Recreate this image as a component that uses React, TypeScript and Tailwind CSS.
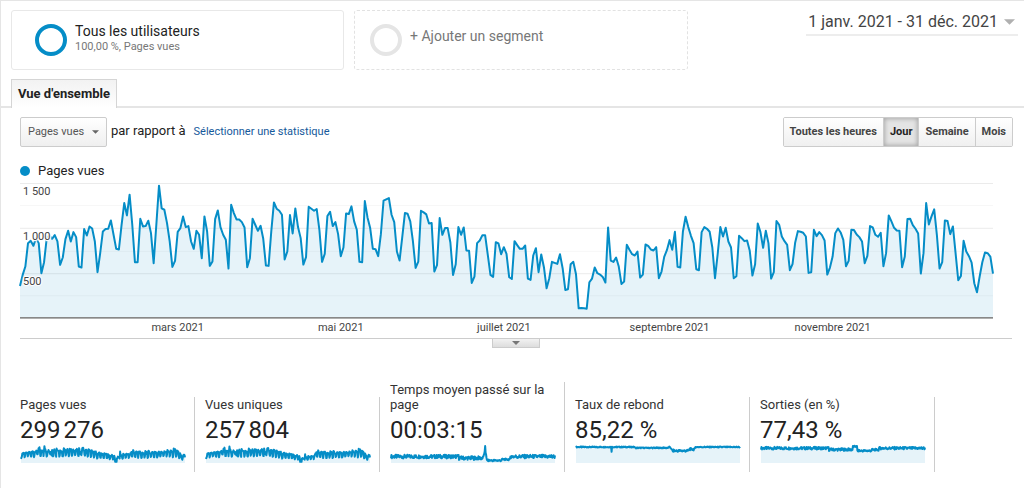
import { useState } from "react";

// One entry per day of the year, measured downwards: 25 is the 1 500 line, 429 the axis
const AXIS = 429;
const TOP = 25;
const dailyViews = [
    333, 300, 275, 205, 198, 213, 190, 205, 295, 262, 190, 182, 192, 181, 200, 270, 248, 193, 168, 200,
    172, 187, 275, 278, 163, 182, 155, 161, 200, 292, 235, 170, 163, 162, 137, 180, 222, 224, 150, 85,
    122, 60, 150, 262, 262, 132, 155, 154, 138, 175, 265, 150, 33, 101, 105, 145, 200, 276, 258, 171,
    160, 125, 157, 154, 200, 222, 168, 180, 250, 125, 170, 273, 260, 133, 107, 157, 180, 195, 281, 90,
    115, 134, 134, 142, 158, 277, 250, 132, 150, 168, 153, 192, 272, 273, 170, 83, 102, 108, 120, 254,
    230, 121, 176, 101, 157, 190, 269, 247, 96, 102, 108, 103, 165, 261, 237, 124, 111, 154, 142, 178,
    244, 218, 116, 118, 95, 140, 165, 261, 262, 79, 128, 160, 222, 223, 244, 178, 78, 74, 70, 120,
    142, 230, 257, 187, 115, 117, 140, 200, 279, 260, 108, 113, 119, 146, 145, 290, 271, 130, 180, 160,
    160, 203, 300, 268, 157, 180, 158, 227, 228, 324, 305, 205, 197, 181, 181, 240, 300, 306, 202, 206,
    238, 217, 237, 307, 312, 199, 211, 222, 222, 212, 311, 315, 242, 220, 292, 239, 277, 340, 310, 261,
    264, 267, 238, 280, 345, 343, 268, 261, 298, 400, 399, 400, 401, 322, 311, 278, 295, 299, 306, 323,
    158, 257, 261, 248, 275, 327, 320, 210, 225, 238, 242, 230, 308, 299, 209, 213, 224, 227, 217, 310,
    290, 246, 226, 196, 225, 171, 276, 278, 170, 126, 157, 183, 205, 283, 286, 172, 157, 162, 171, 218,
    310, 238, 157, 185, 159, 200, 218, 310, 304, 183, 190, 199, 197, 228, 302, 268, 146, 172, 219, 168,
    205, 311, 292, 139, 150, 185, 199, 210, 286, 268, 203, 169, 171, 174, 185, 294, 292, 165, 184, 172,
    181, 197, 299, 278, 245, 175, 161, 173, 195, 274, 258, 165, 166, 179, 187, 200, 265, 243, 154, 158,
    180, 186, 174, 274, 235, 122, 140, 159, 167, 168, 277, 245, 133, 132, 151, 162, 176, 296, 235, 85,
    149, 125, 104, 180, 281, 262, 137, 139, 178, 155, 235, 316, 303, 198, 230, 244, 263, 325, 352, 305,
    262, 233, 235, 245, 296,
];
const LAST_DAY = dailyViews.length - 1;

const months = [
    { label: "mars 2021", day: 59 },
    { label: "mai 2021", day: 120 },
    { label: "juillet 2021", day: 181 },
    { label: "septembre 2021", day: 243 },
    { label: "novembre 2021", day: 304 },
];

const periods = ["Toutes les heures", "Jour", "Semaine", "Mois"];

const noise = (i: number) => {
    const n = Math.sin(i * 12.9898) * 43758.5453;
    return (n - Math.floor(n)) * 2 - 1;
};

// Sparkline series, as a share of the sparkline's height
const views = dailyViews.map((y) => (AXIS - y) / 400);
const uniqueViews = views.map((v, i) => (i > 214 && i < 240 ? v * 0.75 : v * 0.98));
const timeOnPage = views.map((_, i) => {
    if (i >= 205 && i < 213) return [0.4, 0.48, 0.55, 0.7, 1, 0.6, 0.5, 0.3][i - 205];
    if (i >= 213 && i < 265) return 0.15 + noise(i) * 0.05 + (i > 245 ? 0.06 : 0);
    return (i > 150 && i < 205 ? 0.29 : 0.38) + noise(i) * 0.11;
});
const bounceRate = views.map((_, i) => {
    if (i === 79) return 0.66;
    if (i > 214 && i < 265) return 0.72 + noise(i) * 0.07 + (i > 250 ? 0.09 : 0);
    if (i > 206 && i <= 214) return 1 - (i - 206) * 0.03;
    return (i > 130 && i < 206 ? 0.89 : 0.94) + noise(i) * 0.03;
});
const exitRate = views.map((_, i) => {
    if (i >= 204 && i < 214) return 0.97 + noise(i) * 0.05;
    if (i >= 214 && i < 262) return 0.72 + noise(i) * 0.06 + (i > 245 ? 0.06 : 0);
    return (i > 150 && i < 204 ? 0.79 : 0.87) + noise(i) * 0.08;
});

const metrics = [
    { label: "Pages vues", value: "299\u202f276", series: views },
    { label: "Vues uniques", value: "257\u202f804", series: uniqueViews },
    { label: "Temps moyen passé sur la page", value: "00:03:15", series: timeOnPage },
    { label: "Taux de rebond", value: "85,22 %", series: bounceRate },
    { label: "Sorties (en %)", value: "77,43 %", series: exitRate },
];

const Caret = ({ className }: { className: string }) => (
    <svg viewBox="0 0 8 4" className={className} aria-hidden="true">
        <path d="M0 0h8L4 4z" fill="currentColor" />
    </svg>
);

const Segments = () => (
    <div className="flex items-start gap-[10px] pt-[9px] pr-[6px] pl-[10px]">
        <button className="flex h-[60px] w-[333px] items-start rounded-[3px] border border-[#e8e8e8] pt-[13px] pl-[23px] text-left">
            <span className="h-8 w-8 shrink-0 rounded-full border-4 border-[#058dc7]" />
            <span className="-mt-px ml-2 flex flex-col">
                <span className="text-[14px] leading-4 text-[#222]">Tous les utilisateurs</span>
                <span className="text-[11px] leading-4 text-[#777]">100,00 %, Pages vues</span>
            </span>
        </button>
        <button className="flex h-[60px] w-[334px] items-start rounded-[3px] border border-dashed border-[#e2e2e2] pt-[13px] pl-[15px] text-left">
            <span className="h-8 w-8 shrink-0 rounded-full border-4 border-[#e5e5e5]" />
            <span className="ml-2 pt-1 text-[14px] leading-4 text-[#777]">+ Ajouter un segment</span>
        </button>
        <button className="ml-auto flex h-[26px] items-center gap-[6px] border-b-2 border-[#ededed] pr-[3px] pl-[2px] text-[16px] leading-5 whitespace-nowrap text-[#444]">
            1 janv. 2021 - 31 déc. 2021
            <Caret className="h-[6px] w-[11px] text-[#b0b0b0]" />
        </button>
    </div>
);

const Toolbar = () => {
    const [period, setPeriod] = useState("Jour");

    return (
        <div className="flex items-center pt-[9px] pr-[11px] pl-[19px]">
            <div className="relative">
                <select
                    aria-label="Statistique"
                    className="block h-[30px] w-[87px] appearance-none rounded-[2px] border border-[#ccc] bg-linear-to-b from-white to-[#efefef] pl-[7px] text-[11px] text-[#555]"
                >
                    <option>Pages vues</option>
                </select>
                <Caret className="pointer-events-none absolute top-[13px] right-2 h-1 w-[7px] text-[#666]" />
            </div>
            <span className="ml-1 pb-[2px] text-[13px] leading-4 text-[#222]">par rapport à</span>
            <a href="#statistique" className="ml-2 text-[11px] leading-4 text-[#15599b]">
                Sélectionner une statistique
            </a>
            <div className="ml-auto flex h-[30px] divide-x divide-[#ccc] overflow-hidden rounded-[2px] border border-[#ccc]">
                {periods.map((name) => (
                    <button
                        key={name}
                        onClick={() => setPeriod(name)}
                        aria-pressed={name === period}
                        className={`px-[6px] text-[11px] font-bold ${
                            name === period
                                ? "bg-[#e4e4e4] text-[#222] shadow-[inset_0_0_4px_1px_#aaa]"
                                : "bg-linear-to-b from-white to-[#f0f0f0] text-[#444]"
                        }`}
                    >
                        {name}
                    </button>
                ))}
            </div>
        </div>
    );
};

const Chart = () => {
    const line = dailyViews.map((y, day) => `${day * 8},${y}`).join(" ");
    const halo = "[text-shadow:0_0_2px_#fff,0_0_2px_#fff,0_0_2px_#fff,0_0_3px_#fff,0_0_3px_#fff,1px_0_#fff,-1px_0_#fff,0_1px_#fff,0_-1px_#fff]";

    return (
        <div className="pt-4 pr-3 pl-[19px]">
            <div className="flex items-center gap-2 text-[13px] leading-4 text-[#222]">
                <span className="h-[10px] w-[10px] rounded-full bg-[#058dc7]" />
                Pages vues
            </div>
            <div className="relative mt-1 mr-[19px]">
                <svg
                    viewBox={`0 ${TOP} ${LAST_DAY * 8} ${AXIS - TOP}`}
                    preserveAspectRatio="none"
                    className="block h-[135px] w-full overflow-visible"
                    role="img"
                    aria-label="Pages vues par jour"
                >
                    {[25, 91, 159, 228, 295, 361].map((y, i) => (
                        <rect key={y} x="0" y={y} width={LAST_DAY * 8} height="3" fill={i % 2 ? "#f7f7f7" : "#ebebeb"} />
                    ))}
                    <polygon points={`0,${AXIS} ${line} ${LAST_DAY * 8},${AXIS}`} fill="#058dc7" fillOpacity="0.1" />
                    <polyline
                        points={line}
                        fill="none"
                        stroke="#058dc7"
                        strokeWidth="2"
                        strokeLinejoin="round"
                        vectorEffect="non-scaling-stroke"
                    />
                    <rect x="0" y="426" width={LAST_DAY * 8} height="5" fill="#888" />
                </svg>
                <div className={`absolute top-[1px] left-[3px] flex flex-col gap-[29px] text-[11px] leading-4 text-[#444] ${halo}`}>
                    <span>1 500</span>
                    <span>1 000</span>
                    <span>500</span>
                </div>
                <div className="relative h-5">
                    {months.map(({ label, day }) => (
                        <span
                            key={label}
                            className="absolute top-[2px] -translate-x-1/2 text-[11px] leading-4 whitespace-nowrap text-[#444]"
                            style={{ left: `${(day / LAST_DAY) * 100}%` }}
                        >
                            {label}
                        </span>
                    ))}
                </div>
            </div>
            <div className="flex h-[10px] justify-center border-t border-[#ccc]">
                <button
                    aria-label="Afficher les annotations"
                    className="flex h-[9px] w-12 items-center justify-center border border-t-0 border-[#ccc] bg-linear-to-b from-[#f2f2f2] to-[#ddd]"
                >
                    <Caret className="h-1 w-2 text-[#777]" />
                </button>
            </div>
        </div>
    );
};

const Sparkline = ({ series }: { series: number[] }) => {
    const line = series.map((v, i) => `${i},${100 - v * 100}`).join(" ");

    return (
        <svg viewBox={`0 0 ${LAST_DAY} 100`} preserveAspectRatio="none" className="ml-[1px] block h-[17px] w-[164px] overflow-visible">
            <polygon points={`0,100 ${line} ${LAST_DAY},100`} fill="#058dc7" fillOpacity="0.1" />
            <polyline
                points={line}
                fill="none"
                stroke="#058dc7"
                strokeWidth="2"
                strokeLinejoin="round"
                vectorEffect="non-scaling-stroke"
            />
        </svg>
    );
};

const Metrics = () => (
    <div className="flex items-end pt-[34px] pb-4 pl-[9px]">
        {metrics.map(({ label, value, series }) => (
            <div key={label} className="w-[185px] border-r border-[#ccc] pr-2 pb-[9px] pl-[10px]">
                <div className="text-[13px] leading-[15px] text-[#333]">{label}</div>
                <div className="mt-[6px] mb-1 text-[24px] leading-6 text-[#222]">{value}</div>
                <Sparkline series={series} />
            </div>
        ))}
    </div>
);

export default function App() {
    return (
        <main className="border-t border-l border-[#e5e5e5] bg-white font-['Roboto',sans-serif]">
            <Segments />
            <div className="mt-[9px] flex border-b-2 border-[#e5e5e5] pl-[10px]">
                <button className="-mb-[2px] h-[29px] border border-b-0 border-[#d5d5d5] bg-linear-to-b from-[#f2f2f2] to-white px-[6px] text-[13px] font-bold text-[#222]">
                    Vue d'ensemble
                </button>
            </div>
            <Toolbar />
            <Chart />
            <Metrics />
        </main>
    );
}
